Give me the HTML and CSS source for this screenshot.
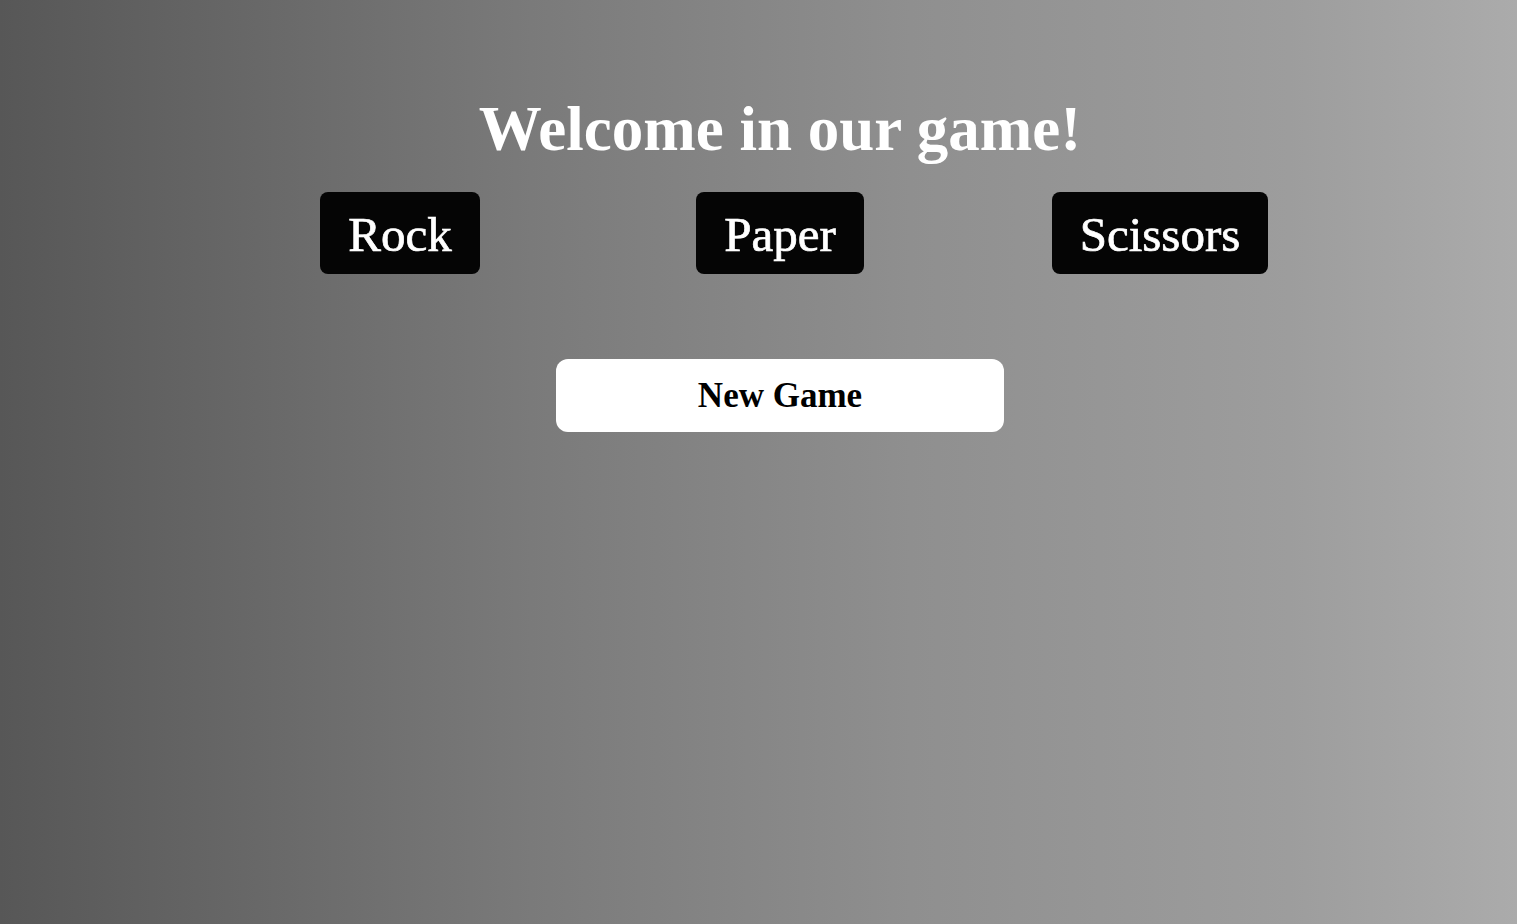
FILE: index.html
```html
<!DOCTYPE html>
<html lang="en">
<head>
<meta charset="utf-8">
<title>Rock Paper Scissors</title>
<link rel="stylesheet" href="styles.css">
</head>
<body>
<main class="page">
  <h1 class="title">Welcome in our game!</h1>
  <div class="choices">
    <button class="choice">Rock</button>
    <button class="choice">Paper</button>
    <button class="choice">Scissors</button>
  </div>
  <button class="new-game">New Game</button>
</main>
</body>
</html>
```
FILE: styles.css
```css
html, body {
  margin: 0;
  padding: 0;
}
body {
  min-height: 100vh;
  background: linear-gradient(to right, #575757 0%, #7a7a7a 35%, #8f8f8f 60%, #9d9d9d 85%, #ababab 100%);
  font-family: "Liberation Serif", "Times New Roman", serif;
}
.page {
  box-sizing: border-box;
  width: 1474px;
  margin-left: 43px;
  padding-top: 92px;
  display: flex;
  flex-direction: column;
  align-items: center;
}
.title {
  margin: 0;
  font-size: 63px;
  line-height: 74px;
  font-weight: bold;
  color: #fff;
}
.choices {
  margin-top: 26px;
  display: grid;
  grid-template-columns: repeat(3, 380px);
  justify-items: center;
}
.choice {
  height: 82px;
  padding: 2px 28px 0;
  border: none;
  border-radius: 8px;
  background: #050505;
  color: #fff;
  font-family: "Liberation Serif", "Times New Roman", serif;
  font-size: 49px;
  line-height: 79px;
  -webkit-text-stroke: 0.7px #fff;
  cursor: pointer;
}
.new-game {
  margin-top: 85px;
  width: 448px;
  height: 73px;
  border: none;
  border-radius: 12px;
  background: #fff;
  color: #000;
  font-family: "Liberation Serif", "Times New Roman", serif;
  font-size: 35px;
  font-weight: bold;
  cursor: pointer;
}
```
